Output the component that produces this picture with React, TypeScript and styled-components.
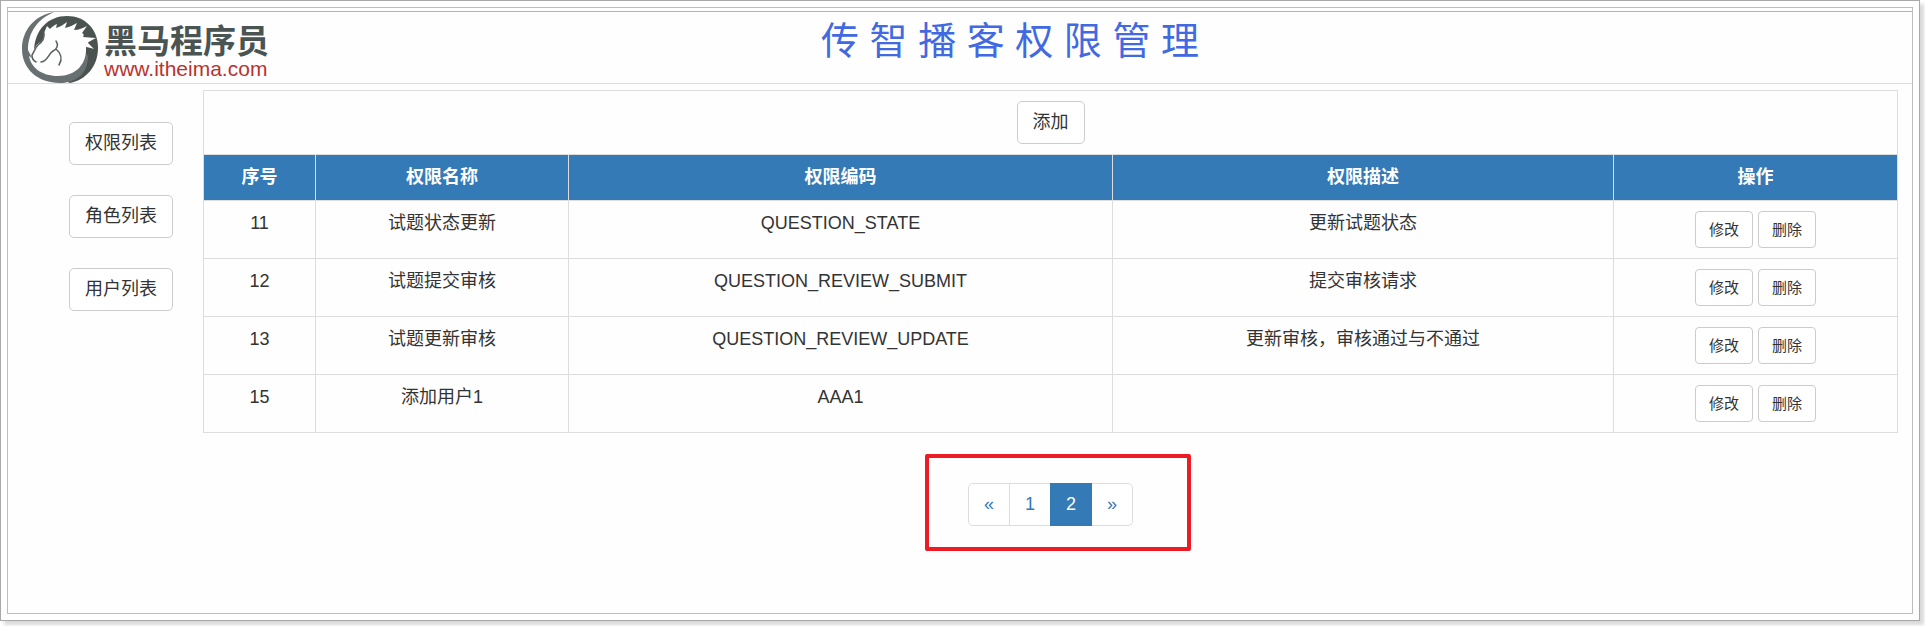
import React from "react";
import styled, { createGlobalStyle } from "styled-components";

const GlobalStyle = createGlobalStyle`
  * { box-sizing: border-box; }
  body {
    margin: 0;
    background: #fff;
    color: #333;
    font-family: "Liberation Sans", "Noto Sans CJK SC", sans-serif;
    font-size: 18px;
    line-height: 25px;
  }
  button, a { font-family: inherit; }
`;

const Shell = styled.div`
  min-height: 100vh;
  padding: 0 5px 5px 0;
  display: flex;
`;

const Frame = styled.div`
  flex: 1;
  display: flex;
  padding: 6px;
  border: 1px solid #a9a9a9;
  background: #fefefe;
  box-shadow: 4px 4px 4px #d8d8d8;
`;

const Page = styled.div`
  flex: 1;
  padding-top: 3px;
  border: 1px solid #bdbdbd;
`;

const Header = styled.header`
  display: grid;
  grid-template-columns: 1fr auto 1fr;
  height: 73px;
  border-top: 1px solid #b4b4b4;
  border-bottom: 1px solid #dcdcdc;
`;

const Logo = styled.a`
  display: flex;
  gap: 5px;
  padding-left: 14px;
  text-decoration: none;
`;

const LogoWords = styled.span`
  display: flex;
  flex-direction: column;
  padding-top: 13px;
`;

const LogoName = styled.span`
  color: #4a5452;
  font-size: 33px;
  font-weight: 700;
  line-height: 34px;
`;

const LogoUrl = styled.span`
  color: #b93331;
  font-size: 21px;
  line-height: 20px;
`;

const Title = styled.h1`
  margin: 0;
  padding-left: 100px;
  color: #4169e1;
  font-size: 38px;
  font-weight: 400;
  line-height: 58px;
`;

const Body = styled.div`
  display: grid;
  grid-template-columns: 195px 1fr;
  padding: 6px 14px 0 0;
`;

const SideNav = styled.nav`
  display: flex;
  flex-direction: column;
  align-items: flex-start;
  gap: 30px;
  padding: 32px 0 0 61px;
`;

const Button = styled.button<{ $small?: boolean }>`
  padding: ${(p) => (p.$small ? "6px 13px" : "8px 15px")};
  border: 1px solid #ccc;
  border-radius: ${(p) => (p.$small ? 4 : 5)}px;
  background: #fff;
  color: #333;
  font-size: ${(p) => (p.$small ? 15 : 18)}px;
  line-height: ${(p) => (p.$small ? 23 : 25)}px;
  cursor: pointer;
`;

const Main = styled.main`
  display: flex;
  flex-direction: column;
  align-items: center;
`;

const Toolbar = styled.div`
  align-self: stretch;
  display: flex;
  justify-content: center;
  padding: 10px;
  border: 1px solid #ddd;
  border-bottom: 0;
`;

const Table = styled.table`
  width: 100%;
  table-layout: fixed;
  border-collapse: collapse;
`;

const HeadCell = styled.th`
  padding: 10px;
  border: 1px solid #ddd;
  background: #337ab7;
  color: #fff;
`;

const Cell = styled.td`
  padding: 10px;
  border: 1px solid #ddd;
  text-align: center;
  vertical-align: top;
`;

const Actions = styled.div`
  display: flex;
  justify-content: center;
  gap: 5px;
`;

const PagerArea = styled.nav`
  position: relative;
  margin: 50px 0;
`;

const Highlight = styled.div`
  position: absolute;
  inset: -29px -58px -25px -43px;
  border: 4px solid #ed1c24;
  border-radius: 2px;
  pointer-events: none;
`;

const Pager = styled.ul`
  display: flex;
  margin: 0;
  padding: 0;
  list-style: none;

  li + li { margin-left: -1px; }
  li:first-child a { border-radius: 5px 0 0 5px; }
  li:last-child a { border-radius: 0 5px 5px 0; }
`;

const PageLink = styled.a<{ $active?: boolean }>`
  display: block;
  width: 42px;
  padding: 8px 0;
  border: 1px solid ${(p) => (p.$active ? "#337ab7" : "#ddd")};
  background: ${(p) => (p.$active ? "#337ab7" : "#fff")};
  color: ${(p) => (p.$active ? "#fff" : "#337ab7")};
  position: relative;
  z-index: ${(p) => (p.$active ? 1 : 0)};
  text-align: center;
  text-decoration: none;
`;

const columns = [
  { label: "序号", width: 112 },
  { label: "权限名称", width: 253 },
  { label: "权限编码", width: 544 },
  { label: "权限描述", width: 501 },
  { label: "操作", width: 284 },
];

const rows = [
  { id: 11, name: "试题状态更新", code: "QUESTION_STATE", description: "更新试题状态" },
  { id: 12, name: "试题提交审核", code: "QUESTION_REVIEW_SUBMIT", description: "提交审核请求" },
  { id: 13, name: "试题更新审核", code: "QUESTION_REVIEW_UPDATE", description: "更新审核，审核通过与不通过" },
  { id: 15, name: "添加用户1", code: "AAA1", description: "" },
];

const HorseMark = () => (
  <svg width="77" height="71" viewBox="0 0 77 71" aria-hidden="true">
    <path
      fill="#4b5351"
      d="M12 40 C12 17 27 4 45 4 C63 4 76 17 76 36 C76 54 64 68 48 71 L36 66 Z"
    />
    <path
      fill="#687072"
      d="M32 0 C13 3 0 18 0 37 C0 57 16 71 38 71 C54 71 66 62 66 44 L60 36 L40 60 L10 46 L6 38 C6 20 16 7 32 0 Z"
    />
    <path
      fill="#fefefe"
      d="M25 14 L28 17 C30 15 32 13 35 12 L34 16 C38 15 41 13 45 10 L43 16 C48 15 51 13 55 11 L52 18 C57 18 61 16 65 14 L60 21 C62 22 62 23 61 25 C65 25 69 26 74 26 C70 28 66 30 66 31 L72 37 C69 36 66 35 64 35 C65 52 54 64 36 64 C19 64 9 55 7 44 L10 46 C11 49 12 50 14 50 L20 48 L22 30 L12 40 C10 43 10 43 10 42 C12 37 14 33 17 31 C21 29 22 26 22 21 Z"
    />
    <path
      fill="#fefefe"
      d="M12 40 L21 28 L36 30 L33 46 L14 50 C10 48 10 45 12 40 Z"
    />
    <path
      fill="none"
      stroke="#59615f"
      strokeWidth="1.5"
      strokeLinecap="round"
      d="M22 21 C23 27 20 30 16 33 C13 36 12 40 10 43 C10 46 12 49 14 50 M19 50 C26 49 26 42 31 39 C35 37 37 33 34 29 M34 37 C40 42 40 48 37 53"
    />
  </svg>
);

export default function App() {
  return (
    <>
      <GlobalStyle />
      <Shell>
        <Frame>
          <Page>
            <Header>
              <Logo href="#">
                <HorseMark />
                <LogoWords>
                  <LogoName>黑马程序员</LogoName>
                  <LogoUrl>www.itheima.com</LogoUrl>
                </LogoWords>
              </Logo>
              <Title>传 智 播 客 权 限 管 理</Title>
            </Header>
            <Body>
              <SideNav>
                <Button type="button">权限列表</Button>
                <Button type="button">角色列表</Button>
                <Button type="button">用户列表</Button>
              </SideNav>
              <Main>
                <Toolbar>
                  <Button type="button">添加</Button>
                </Toolbar>
                <Table>
                  <colgroup>
                    {columns.map((c) => (
                      <col key={c.label} width={c.width} />
                    ))}
                  </colgroup>
                  <thead>
                    <tr>
                      {columns.map((c) => (
                        <HeadCell key={c.label} scope="col">{c.label}</HeadCell>
                      ))}
                    </tr>
                  </thead>
                  <tbody>
                    {rows.map((r) => (
                      <tr key={r.id}>
                        <Cell>{r.id}</Cell>
                        <Cell>{r.name}</Cell>
                        <Cell>{r.code}</Cell>
                        <Cell>{r.description}</Cell>
                        <Cell>
                          <Actions>
                            <Button type="button" $small>修改</Button>
                            <Button type="button" $small>删除</Button>
                          </Actions>
                        </Cell>
                      </tr>
                    ))}
                  </tbody>
                </Table>
                <PagerArea aria-label="分页">
                  <Pager>
                    <li><PageLink href="#">«</PageLink></li>
                    <li><PageLink href="#">1</PageLink></li>
                    <li><PageLink href="#" $active aria-current="page">2</PageLink></li>
                    <li><PageLink href="#">»</PageLink></li>
                  </Pager>
                  <Highlight />
                </PagerArea>
              </Main>
            </Body>
          </Page>
        </Frame>
      </Shell>
    </>
  );
}
